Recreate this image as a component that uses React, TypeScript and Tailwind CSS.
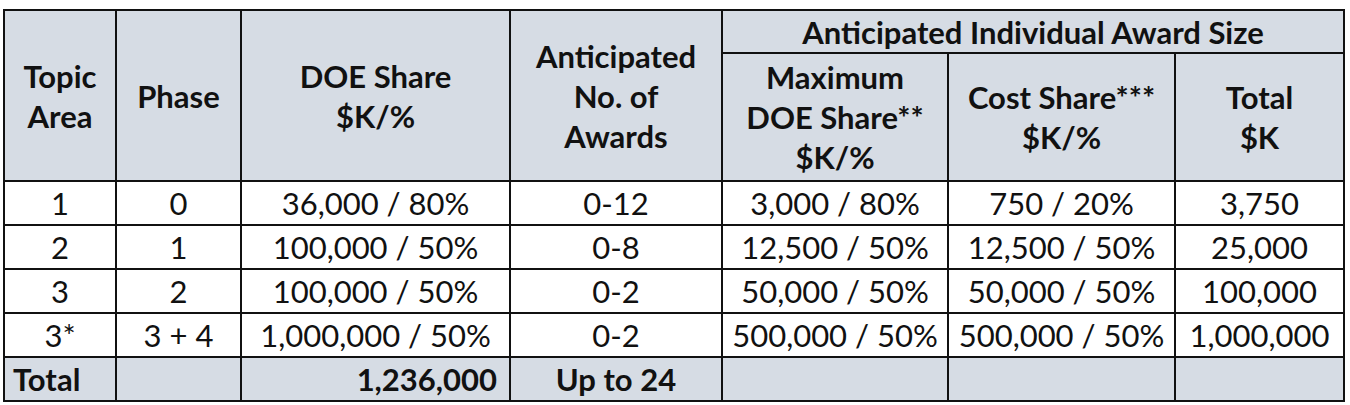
const rows = [
  ['1', '0', '36,000 / 80%', '0-12', '3,000 / 80%', '750 / 20%', '3,750'],
  ['2', '1', '100,000 / 50%', '0-8', '12,500 / 50%', '12,500 / 50%', '25,000'],
  ['3', '2', '100,000 / 50%', '0-2', '50,000 / 50%', '50,000 / 50%', '100,000'],
  ['3*', '3 + 4', '1,000,000 / 50%', '0-2', '500,000 / 50%', '500,000 / 50%', '1,000,000'],
];

const widths = [112, 125, 269, 212, 226, 227, 169];

const cell = 'border-2 border-[#111] p-0';
const head = `${cell} bg-[#d6dce4] font-bold text-center align-middle leading-[40px]`;

export default function App() {
  return (
    <div className="bg-white w-[1350px] h-[405px] pt-[9px] pl-[3px] font-['Lato',sans-serif] text-[31px] text-[#111]">
      <table className="table-fixed border-collapse w-[1340px]">
        <colgroup>
          {widths.map((w, i) => (
            <col key={i} style={{ width: w }} />
          ))}
        </colgroup>
        <thead>
          <tr className="h-[43px]">
            <th rowSpan={2} className={head}>
              Topic
              <br />
              Area
            </th>
            <th rowSpan={2} className={head}>Phase</th>
            <th rowSpan={2} className={head}>
              DOE Share
              <br />
              $K/%
            </th>
            <th rowSpan={2} className={head}>
              Anticipated
              <br />
              No. of
              <br />
              Awards
            </th>
            <th colSpan={3} className={`${head} leading-[38px]`}>
              Anticipated Individual Award Size
            </th>
          </tr>
          <tr className="h-[128px]">
            <th className={head}>
              Maximum
              <br />
              DOE Share**
              <br />
              $K/%
            </th>
            <th className={head}>
              Cost Share***
              <br />
              $K/%
            </th>
            <th className={head}>
              Total
              <br />
              $K
            </th>
          </tr>
        </thead>
        <tbody>
          {rows.map((r) => (
            <tr key={r[0]} className="h-[44px]">
              {r.map((v, i) => (
                <td key={i} className={`${cell} text-center leading-[40px]`}>
                  {v}
                </td>
              ))}
            </tr>
          ))}
          <tr className="h-[44px] bg-[#d6dce4] font-bold">
            <td className={`${cell} text-left pl-[8px] leading-[40px]`}>Total</td>
            <td className={cell}></td>
            <td className={`${cell} text-right pr-[12px] leading-[40px]`}>1,236,000</td>
            <td className={`${cell} text-center leading-[40px]`}>Up to 24</td>
            <td className={cell}></td>
            <td className={cell}></td>
            <td className={cell}></td>
          </tr>
        </tbody>
      </table>
    </div>
  );
}
